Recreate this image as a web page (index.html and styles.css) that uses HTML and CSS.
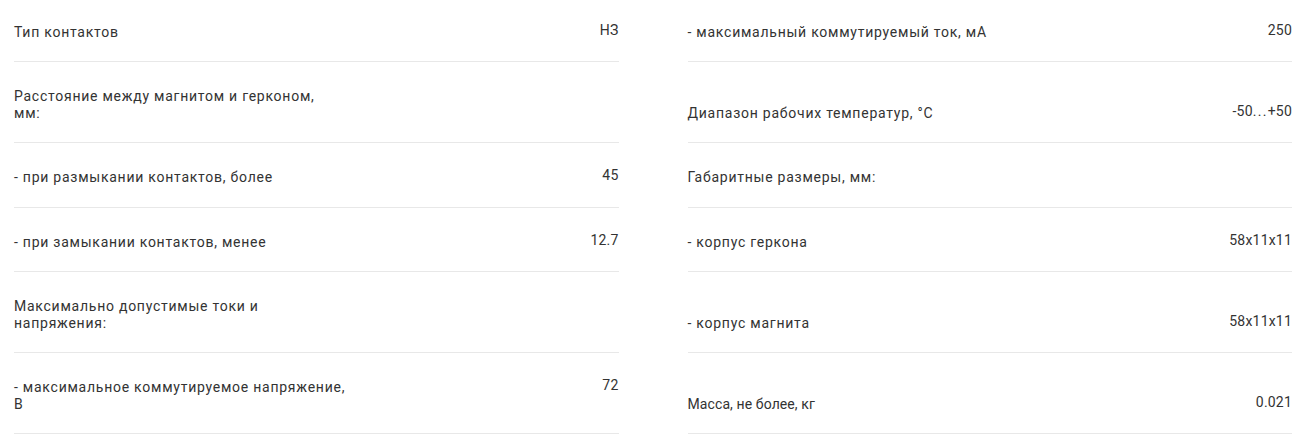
FILE: index.html
```html
<html>
<head>
<title>Характеристики</title>
<link rel="stylesheet" href="styles.css">
</head>
<body>
<div class="specs">
  <div class="row left"><span class="name">Тип контактов</span><span class="value">НЗ</span></div>
  <div class="row right"><span class="name">- максимальный коммутируемый ток, мА</span><span class="value">250</span></div>

  <div class="row left"><span class="name">Расстояние между магнитом и герконом,<br>мм:</span><span class="value"></span></div>
  <div class="row right"><span class="name">Диапазон рабочих температур, °C</span><span class="value">-50<span class="dots">...</span>+50</span></div>

  <div class="row left"><span class="name">- при размыкании контактов, более</span><span class="value">45</span></div>
  <div class="row right"><span class="name">Габаритные размеры, мм:</span><span class="value"></span></div>

  <div class="row left"><span class="name">- при замыкании контактов, менее</span><span class="value">12.7</span></div>
  <div class="row right"><span class="name">- корпус геркона</span><span class="value">58x11x11</span></div>

  <div class="row left"><span class="name">Максимально допустимые токи и<br>напряжения:</span><span class="value"></span></div>
  <div class="row right"><span class="name">- корпус магнита</span><span class="value">58x11x11</span></div>

  <div class="row left"><span class="name">- максимальное коммутируемое напряжение,<br>В</span><span class="value">72</span></div>
  <div class="row right"><span class="name narrow">Масса, не более, кг</span><span class="value">0.021</span></div>
</div>
</body>
</html>
```

FILE: styles.css
```css
body {
  margin: 0;
  background-color: #ffffff;
  font-family: Roboto, "Liberation Sans", sans-serif;
  color: #333333;
}

.specs {
  display: grid;
  grid-template-columns: 1fr 1fr;
  column-gap: 69px;
  padding: 0 15px 0 14px;
  margin-top: -2.5px;
}

.row {
  display: flex;
  justify-content: space-between;
  padding: 26px 0 21px 0;
  border-bottom: 1px solid #e8e8e8;
}

.row.left {
  align-items: flex-start;
}

.row.right {
  align-items: flex-end;
}

.name {
  font-size: 14px;
  line-height: 16.5px;
  letter-spacing: 0.75px;
}

.name.narrow {
  letter-spacing: 0.1px;
}

.value {
  font-size: 14px;
  line-height: 16.5px;
  letter-spacing: 0.2px;
  text-align: right;
  margin-top: -2px;
  margin-bottom: 2px;
}

.dots {
  letter-spacing: 1.3px;
}
```
